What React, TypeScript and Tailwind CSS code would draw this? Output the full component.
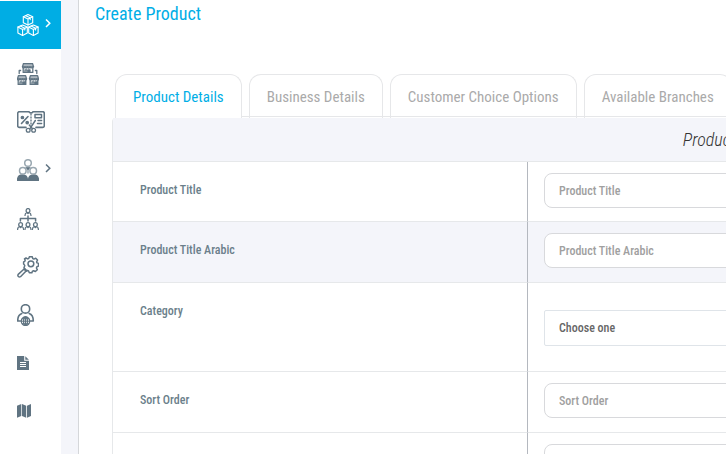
import type { ReactNode } from "react";
import clsx from "clsx";

const IconBase = ({ children, wide }: { children: ReactNode; wide?: boolean }) => (
    <svg
        viewBox={wide ? "0 0 28 22" : "0 0 22 22"}
        className={clsx("h-[22px] shrink-0", wide ? "w-7" : "w-[22px]")}
        fill="none"
        stroke="currentColor"
        strokeWidth="1.3"
        strokeLinecap="round"
        strokeLinejoin="round"
        aria-hidden="true"
    >
        {children}
    </svg>
);

const Cube = ({ x, y }: { x: number; y: number }) => (
    <g transform={`translate(${x} ${y})`} strokeWidth="1.1">
        <path d="M5 .6 9.7 2.7v6L5 11 .3 8.7v-6z" />
        <path d="M.3 2.7 5 5l4.7-2.3M5 5v6M2.7 1.7l4.5 2.1v1.8" />
    </g>
);

const ProductsIcon = () => (
    <IconBase>
        <Cube x={6} y={0} />
        <Cube x={0.6} y={10.4} />
        <Cube x={11.4} y={10.4} />
    </IconBase>
);

const Shop = ({ x, y, w }: { x: number; y: number; w: number }) => (
    <g transform={`translate(${x} ${y})`}>
        <path d={`M1.4 .6h${w - 2.8}l.9 3.2h-${w - 1}z`} fill="currentColor" fillOpacity="0.5" />
        <path d={`M.5 3.8c.4 1.6 2 1.6 2.5 0 .5 1.6 2 1.6 2.5 0 .5 1.6 2 1.6 2.5 0 .4 1.6 1.6 1.4 ${w - 8.5} 0`} />
        <path d={`M1.2 5v4.4h${w - 2.4}V5M3 9.4V6.8h2v2.6M6.4 6.8H8v1.4H6.4z`} />
    </g>
);

const StoresIcon = () => (
    <IconBase>
        <Shop x={5} y={0} w={12} />
        <Shop x={0} y={12} w={10} />
        <Shop x={12} y={12} w={10} />
        <path d="M3.6 7.5H2.2v3M18.4 7.5h1.4v3" />
    </IconBase>
);

const CouponIcon = () => (
    <IconBase wide>
        <path
            d="M9 16.4H2.4A1.7 1.7 0 0 1 .7 14.7V2.4A1.7 1.7 0 0 1 2.4.7H12c.4 1.6 3.6 1.6 4 0h9.6a1.7 1.7 0 0 1 1.7 1.7v12.3a1.7 1.7 0 0 1-1.7 1.7H19"
            strokeWidth="1.6"
        />
        <path d="M14 3v10" strokeDasharray="1 2" />
        <path d="M4.5 12.5 11 5.5" strokeWidth="1.6" />
        <circle cx="5.4" cy="6.5" r="1.2" fill="currentColor" />
        <circle cx="10.2" cy="11.6" r="1.2" fill="currentColor" />
        <path d="M18 3.6h6.5v3.2H18zM21 9.5h3.6M20.5 12.5h4.1" strokeWidth="1.5" />
        <path d="M18.3 9.5 12.8 17.8M12.3 14l3.2 3.8" strokeWidth="1.5" />
        <circle cx="11.2" cy="19.3" r="1.9" />
        <circle cx="16.6" cy="19.3" r="1.9" />
    </IconBase>
);

const CustomersIcon = () => (
    <IconBase>
        <path d="M.5 21.4c0-3.6 1.6-5.4 5-5.4s5 1.8 5 5.4zM11.5 21.4c0-3.6 1.6-5.4 5-5.4s5 1.8 5 5.4z" fill="currentColor" />
        <path d="M9 8.4 11 11l2-2.6zM11 11v3" fill="currentColor" strokeOpacity="0.7" />
        <g fill="white" stroke="#9aa8b1" strokeWidth="1.5">
            <circle cx="11" cy="4" r="3.3" />
            <circle cx="5.8" cy="11.8" r="3.3" />
            <circle cx="16.2" cy="11.8" r="3.3" />
        </g>
    </IconBase>
);

const Person = ({ x, y }: { x: number; y: number }) => (
    <g transform={`translate(${x} ${y})`}>
        <ellipse cx="3" cy="2.7" rx="1.9" ry="2.1" />
        <path d="M0 7.4c0-1.8.6-2.4 2-2.9l1 1.1 1-1.1c1.4.5 2 1.1 2 2.9" />
    </g>
);

const HierarchyIcon = () => (
    <IconBase>
        <Person x={8} y={0} />
        <Person x={0.6} y={14} />
        <Person x={8} y={14} />
        <Person x={15.4} y={14} />
        <path d="M11 8v5M3.4 13v-2.5h15.2V13" strokeWidth="1.5" />
    </IconBase>
);

const GearSearchIcon = () => (
    <IconBase>
        <g strokeWidth="1.5">
            <path d="M12.4.7h2.8l.6 1.9 1.1.5 1.8-.9 1.8 1.9-.9 1.8.4 1 1.5.5v2.7l-1.6.7-.5 1.2.9 1.7-1.9 1.8-1.8-.8-1.1.4-.6 1.7h-2.6l-.7-1.8-1.1-.5-1.7.8L7 11.5l.8-1.7-.5-1.1L6.600 8V5.900l1.200-.6.4-1.200-.7-1.200L9 2l1.600.9 1.100-.4z" />
            <circle cx="13.9" cy="7.8" r="2.9" />
            <path d="M7.3 12.2 9.7 14.6M7.1 13l2 2-5.6 5.7c-1.6 1-3.3-.7-2.3-2.3z" />
        </g>
    </IconBase>
);

const UserGlobeIcon = () => (
    <IconBase>
        <circle cx="8.5" cy="4.9" r="4.2" strokeWidth="1.6" />
        <path d="M4.8 9.5C1.9 10.5.7 12.8.7 17h2.7M12.2 9.5c2.9 1 4.1 3.3 4.1 7.5h-2.7" strokeWidth="1.6" />
        <circle cx="8.5" cy="17.2" r="4.2" />
        <ellipse cx="8.5" cy="17.2" rx="1.9" ry="4.2" />
        <path d="M4.3 17.2h8.4M5.2 14.7h6.6M5.2 19.7h6.6M8.5 13v8.4" strokeWidth="1" />
    </IconBase>
);

const FileIcon = () => (
    <IconBase>
        <path d="M0 4h7.2v4.7H12V18H0zM8.3 4.2l3.6 3.5H8.3z" fill="currentColor" stroke="none" />
        <path d="M3 10.5h6M3 12.5h6M3 14.5h6" stroke="white" strokeWidth="1" strokeLinecap="butt" />
    </IconBase>
);

const MapIcon = () => (
    <IconBase>
        <path d="M0 5.8 4.3 4v12L0 17.8zM5 4l4.2 1.8v12L5 16zM10 5.8 14 4v12l-4 1.800z" fill="currentColor" stroke="none" />
    </IconBase>
);

const Chevron = () => (
    <svg viewBox="0 0 6 22" className="h-[22px] w-1.5 shrink-0" fill="none" stroke="currentColor" strokeWidth="1.5" aria-hidden="true">
        <path d="M1 5.5 4.8 9.2 1 13" />
    </svg>
);

const navItems = [
    { label: "Products", icon: ProductsIcon, active: true, submenu: true },
    { label: "Stores", icon: StoresIcon },
    { label: "Coupons", icon: CouponIcon },
    { label: "Customers", icon: CustomersIcon, submenu: true },
    { label: "Staff", icon: HierarchyIcon },
    { label: "Settings", icon: GearSearchIcon },
    { label: "User regions", icon: UserGlobeIcon },
    { label: "Reports", icon: FileIcon },
    { label: "Map", icon: MapIcon },
];

const tabs = ["Product Details", "Business Details", "Customer Choice Options", "Available Branches"];

interface Field {
    id: string;
    label: string;
    type: "text" | "select";
    rowClass: string;
}

const fields: Field[] = [
    { id: "title", label: "Product Title", type: "text", rowClass: "h-[60px]" },
    { id: "title-ar", label: "Product Title Arabic", type: "text", rowClass: "h-[61px] bg-[#f4f5fa]" },
    { id: "category", label: "Category", type: "select", rowClass: "h-[89px]" },
    { id: "sort", label: "Sort Order", type: "text", rowClass: "h-[61px]" },
    { id: "extra", label: "", type: "text", rowClass: "h-[61px]" },
];

const Sidebar = () => (
    <nav className="w-[61px] shrink-0 bg-white pt-px text-[#607482]">
        {navItems.map(({ label, icon: Icon, active, submenu }) => (
            <a
                key={label}
                href="#"
                aria-label={label}
                className={clsx("flex h-12 items-center gap-1.5 pl-[17px]", active && "bg-[#00ade4] text-white", submenu && "mb-px")}
            >
                <Icon />
                {submenu && <Chevron />}
            </a>
        ))}
    </nav>
);

const TabBar = () => (
    <div
        role="tablist"
        className="ml-[3px] flex h-11 gap-[7px] bg-[linear-gradient(#e6e7e9,#e6e7e9)] bg-[length:100%_1px] bg-[position:0_42px] bg-no-repeat"
    >
        {tabs.map((tab, i) => (
            <button
                key={tab}
                type="button"
                role="tab"
                aria-selected={i === 0}
                className={clsx(
                    "h-11 shrink-0 rounded-t-xl border border-b-0 border-[#e6e7e9] px-[17px] text-[15px] leading-6",
                    i === 0 ? "bg-white text-[#00aee6]" : "text-[#aaa]"
                )}
            >
                {tab}
            </button>
        ))}
    </div>
);

const FieldRow = ({ id, label, type, rowClass }: Field) => (
    <tr className={rowClass}>
        <th scope="row" className="border-b border-[#e6e8ea] pt-[18px] pl-[27px] text-left align-top font-medium">
            <label htmlFor={id} className="block text-xs leading-5 text-[#6b7f8b]">
                {label}
            </label>
        </th>
        <td className={clsx("border-b border-l border-b-[#e6e8ea] border-l-[#b4b8bf] px-4 align-top", type === "select" ? "pt-[27px]" : "pt-[11px]")}>
            {type === "select" ? (
                <select id={id} className="block h-9 w-full appearance-none rounded-xs border border-[#dfe4e9] bg-white px-3.5 text-xs font-medium text-[#666]">
                    <option>Choose one</option>
                </select>
            ) : (
                <input
                    id={id}
                    type="text"
                    placeholder={label}
                    className="block h-[35px] w-full rounded-lg border border-[#d8d9dc] bg-white px-3.5 text-xs font-medium placeholder:text-[#a0a0a0]"
                />
            )}
        </td>
    </tr>
);

export default function App() {
    return (
        <div className="flex h-screen overflow-hidden bg-[#f4f5fa] font-['Roboto_Condensed','Liberation_Sans_Narrow','Liberation_Sans',sans-serif]">
            <Sidebar />
            <main className="ml-[17px] min-w-0 flex-1 overflow-hidden border-l border-[#d5d7da] bg-white">
                <h1 className="mt-0.5 pl-4 text-lg leading-6 text-[#00aee6]">Create Product</h1>
                <form className="mt-12 ml-[33px] min-w-[1244px]">
                    <TabBar />
                    <div className="rounded-t-sm border-l border-[#e6e8ea]">
                        <table className="w-full table-fixed border-separate border-spacing-0">
                            <colgroup>
                                <col className="w-[414px]" />
                                <col />
                            </colgroup>
                            <thead>
                                <tr className="h-11">
                                    <th colSpan={2} className="border-b border-[#e6e8ea] bg-[#f4f5fa] text-center text-lg leading-6 font-light text-[#333] italic">
                                        Product Details
                                    </th>
                                </tr>
                            </thead>
                            <tbody>
                                {fields.map((field) => (
                                    <FieldRow key={field.id} {...field} />
                                ))}
                            </tbody>
                        </table>
                    </div>
                </form>
            </main>
        </div>
    );
}
